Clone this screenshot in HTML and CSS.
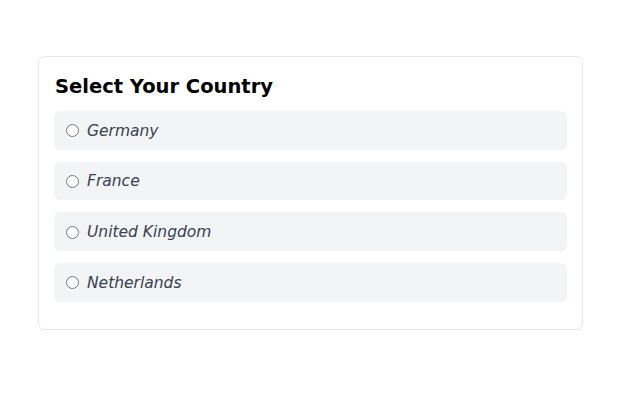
FILE: index.html
```html
<!DOCTYPE html>
<html>
<head>
<meta charset="utf-8">
<link rel="stylesheet" href="styles.css">
</head>
<body>
<div class="card">
  <h2 class="title">Select Your Country</h2>
  <label class="option"><input type="radio" name="country"><span>Germany</span></label>
  <label class="option"><input type="radio" name="country"><span>France</span></label>
  <label class="option"><input type="radio" name="country"><span>United Kingdom</span></label>
  <label class="option"><input type="radio" name="country"><span>Netherlands</span></label>
</div>
</body>
</html>
```
FILE: styles.css
```css
html, body { margin: 0; padding: 0; background: #fff; }
body {
  font-family: "DejaVu Sans", sans-serif;
  padding: 56px 42px 0 38px;
}
.card {
  border: 1px solid #e5e7eb;
  border-radius: 6px;
  padding: 16px 15px 15px 15px;
  background: #fff;
}
.title {
  margin: 2px 0 12px 1px;
  font-size: 19.5px;
  font-weight: bold;
  line-height: 24px;
  color: #000;
}
.option {
  display: flex;
  align-items: center;
  gap: 8px;
  padding: 10.5px 12px 9.5px;
  margin-bottom: 12px;
  background: #f3f4f6;
  border-radius: 6px;
  font-style: italic;
  font-size: 15.5px;
  line-height: 18.67px;
  color: #374151;
}
.option input {
  margin: 0;
  width: 13px;
  height: 13px;
}
```
